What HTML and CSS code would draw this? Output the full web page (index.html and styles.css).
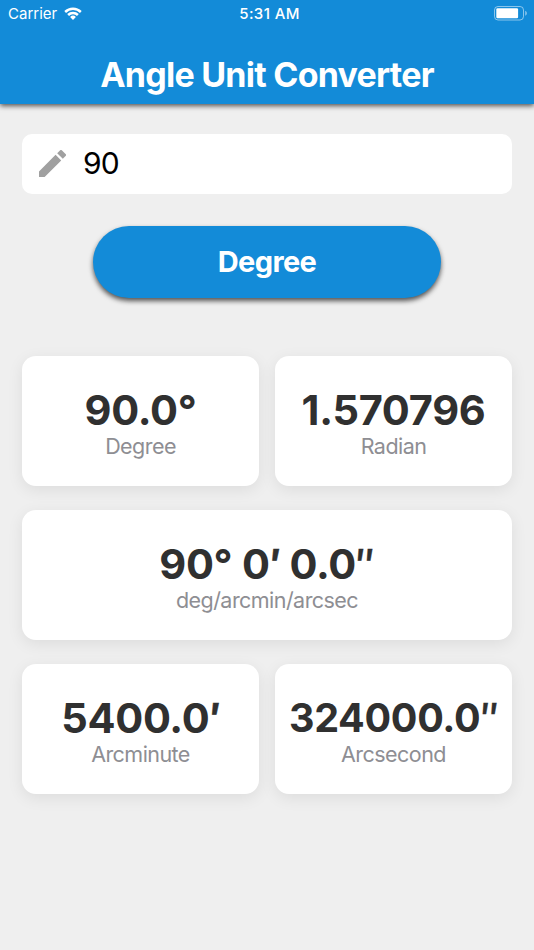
FILE: index.html
```html
<!DOCTYPE html>
<html lang="en">
<head>
    <meta charset="UTF-8">
    <meta name="viewport" content="width=device-width, initial-scale=1.0">
    <title>Angle Unit Converter</title>
    <link rel="stylesheet" href="styles.css">
</head>
<body>
    <header class="header">
        <div class="status-bar">
            <div class="carrier">
                <span>Carrier</span>
                <svg class="wifi" viewBox="0 0 18 13">
                    <path d="M0.3 4.1a12.4 12.4 0 0 1 17.4 0l-1.7 1.8a10 10 0 0 0-14 0z"/>
                    <path d="M3.2 7.1a8.2 8.2 0 0 1 11.6 0l-1.8 1.8a5.7 5.7 0 0 0-8 0z"/>
                    <path d="M6.1 10a4.1 4.1 0 0 1 5.8 0L9 12.9z"/>
                </svg>
            </div>
            <span class="time">5:31 AM</span>
            <svg class="battery" viewBox="0 0 34 15">
                <rect class="battery-shell" x="0.5" y="0.5" width="29" height="13.5" rx="3.5"/>
                <rect x="2.3" y="2.3" width="21.8" height="9.9" rx="1.2"/>
                <path class="battery-cap" d="M31.2 4.8c2.2 1 2.2 4 0 5z"/>
            </svg>
        </div>
        <h1 class="title">Angle Unit Converter</h1>
    </header>

    <main class="content">
        <label class="field">
            <svg class="pencil" viewBox="3 3 18 18">
                <path d="M3 17.25V21h3.75L17.81 9.94l-3.75-3.75L3 17.25zM20.71 7.04a1 1 0 0 0 0-1.41l-2.34-2.34a1 1 0 0 0-1.41 0l-1.83 1.83 3.75 3.75 1.83-1.83z"/>
            </svg>
            <input class="value" type="text" value="90">
        </label>

        <button class="unit-button">Degree</button>

        <div class="results">
            <div class="card">
                <div class="number">90.0°</div>
                <div class="unit">Degree</div>
            </div>
            <div class="card">
                <div class="number">1.570796</div>
                <div class="unit">Radian</div>
            </div>
            <div class="card wide">
                <div class="number">90° 0<span class="prime">′</span> 0.0<span class="prime double">″</span></div>
                <div class="unit">deg/arcmin/arcsec</div>
            </div>
            <div class="card">
                <div class="number">5400.0<span class="prime">′</span></div>
                <div class="unit">Arcminute</div>
            </div>
            <div class="card">
                <div class="number small">324000.0<span class="prime double">″</span></div>
                <div class="unit">Arcsecond</div>
            </div>
        </div>
    </main>
</body>
</html>
```

FILE: styles.css
```css
* {
    box-sizing: border-box;
}

body {
    margin: 0;
    min-height: 950px;
    background-color: #efefef;
    font-family: Inter, sans-serif;
}

.header {
    height: 103.5px;
    background-color: #138bd8;
    color: #fff;
    box-shadow: 0 2px 5px rgba(0, 0, 0, 0.65);
}

.status-bar {
    display: grid;
    grid-template-columns: 1fr auto 1fr;
    align-items: center;
    height: 26px;
    padding: 0 6px 0 8px;
    font-size: 15px;
}

.carrier {
    display: flex;
    align-items: center;
    gap: 7px;
}

.wifi {
    width: 18px;
    height: 13px;
    fill: #fff;
}

.time {
    padding-left: 3px;
    font-weight: 500;
    letter-spacing: 0.4px;
}

.battery {
    justify-self: end;
    width: 34px;
    height: 15px;
    fill: #fff;
}

.battery-shell {
    fill: none;
    stroke: #fff;
    stroke-opacity: 0.5;
}

.battery-cap {
    fill-opacity: 0.5;
}

.title {
    margin: 28px 0 0;
    font-size: 34px;
    line-height: 42px;
    font-weight: 700;
    letter-spacing: -0.75px;
    text-align: center;
}

.content {
    padding: 30px 22px;
}

.field {
    display: flex;
    align-items: center;
    gap: 17px;
    height: 60px;
    padding: 0 17px;
    border-radius: 10px;
    background: #fff;
}

.pencil {
    width: 27px;
    height: 27px;
    fill: #a0a0a0;
}

.value {
    flex: 1;
    min-width: 0;
    padding: 0 0 2px;
    border: none;
    outline: none;
    font-family: inherit;
    font-size: 30px;
    letter-spacing: -0.8px;
    color: #000;
}

.unit-button {
    display: block;
    width: 348px;
    height: 72px;
    margin: 32px auto 58.8px;
    padding-bottom: 2px;
    border: none;
    border-radius: 36px;
    background-color: #138bd8;
    color: #fff;
    font-family: inherit;
    font-size: 29px;
    font-weight: 700;
    letter-spacing: -0.6px;
    box-shadow: 0 3px 5px rgba(0, 0, 0, 0.65);
}

.results {
    display: grid;
    grid-template-columns: 1fr 1fr;
    gap: 24px 16px;
}

.card {
    height: 130px;
    padding-top: 30px;
    border-radius: 14px;
    background: #fff;
    text-align: center;
    white-space: nowrap;
    box-shadow: 0 4px 16px rgba(0, 0, 0, 0.08);
}

.wide {
    grid-column: span 2;
}

.number {
    font-size: 41.5px;
    line-height: 48px;
    font-weight: 700;
    letter-spacing: -0.3px;
    color: #303030;
}

.small {
    font-size: 39.5px;
}

.prime {
    display: inline-block;
    margin: 0 -1px 0 0.3px;
    line-height: 1;
    -webkit-text-stroke: 0.4px #303030;
}

/* Inter sets the two strokes too far apart */
.double {
    margin-right: -4px;
    transform: scaleX(0.8);
    transform-origin: left;
}

.unit {
    margin-top: -1px;
    font-size: 21.5px;
    line-height: 26px;
    letter-spacing: -0.55px;
    color: #8e8e93;
}
```
